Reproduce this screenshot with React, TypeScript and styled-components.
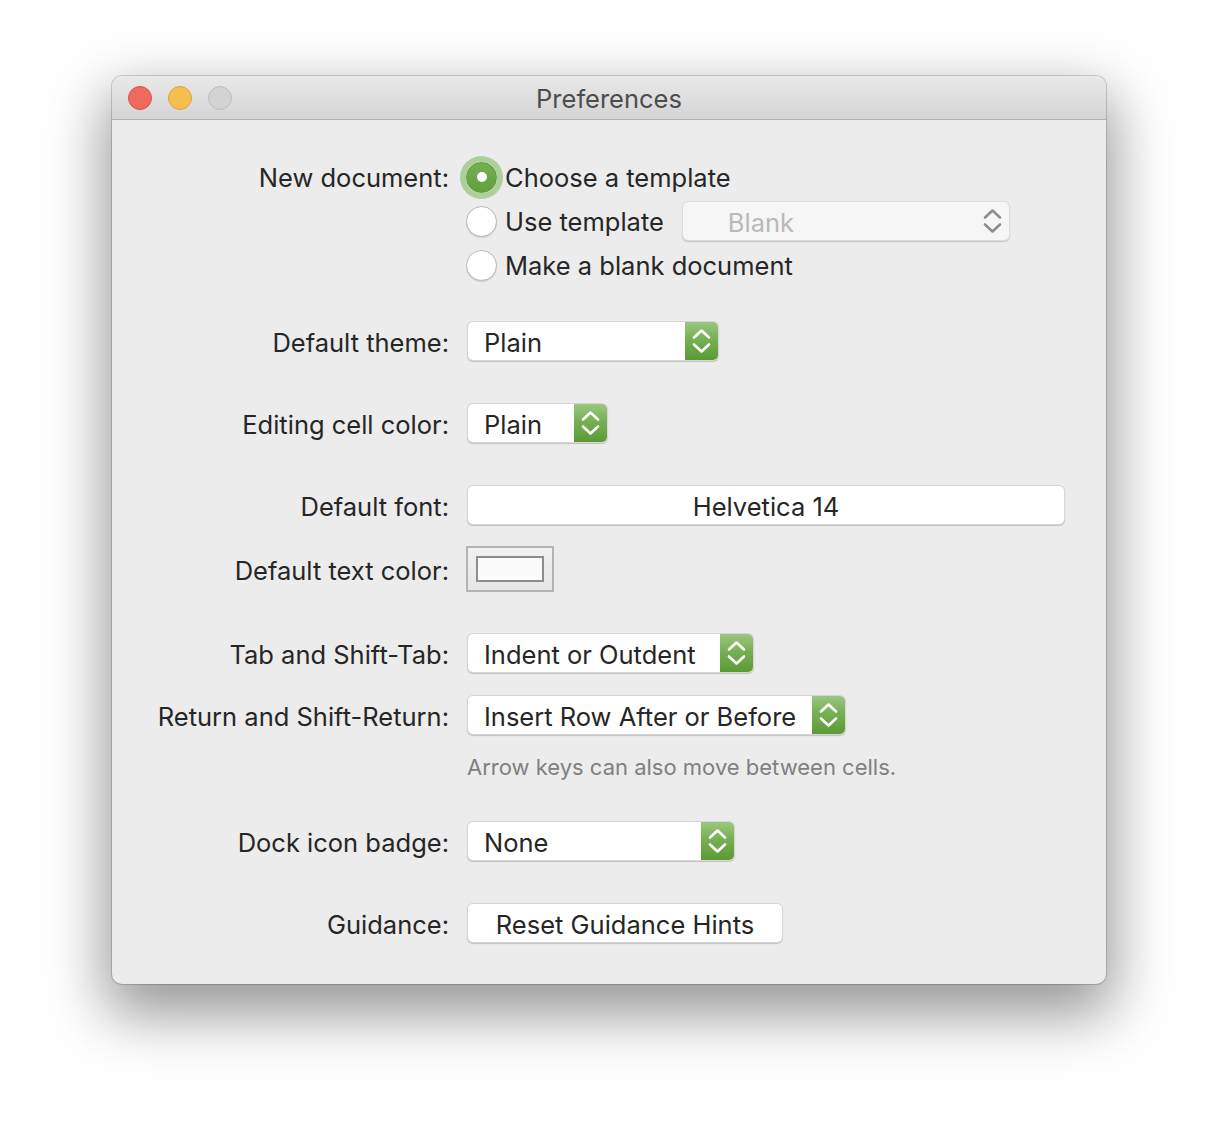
import React from "react";
import styled, { createGlobalStyle } from "styled-components";

const Global = createGlobalStyle`
  html, body { margin: 0; padding: 0; background: #ffffff; }
  body { font-family: Inter, "Helvetica Neue", "Liberation Sans", Arial, sans-serif; -webkit-font-smoothing: antialiased; }
`;

const Page = styled.div`
  padding: 76px 0 148px 112px;
`;

const Window = styled.div`
  width: 994px;
  height: 908px;
  border-radius: 10px;
  overflow: hidden;
  background: #ececec;
  box-shadow: 0 0 0 1px rgba(0, 0, 0, 0.16), 0 24px 60px 6px rgba(0, 0, 0, 0.42);
  display: flex;
  flex-direction: column;
`;

const TitleBar = styled.div`
  height: 43px;
  flex: none;
  position: relative;
  display: flex;
  align-items: center;
  justify-content: center;
  background: linear-gradient(#e9e9e9, #d4d4d4);
  border-bottom: 1px solid #b4b4b4;
`;

const Lights = styled.div`
  position: absolute;
  left: 16px;
  top: 10px;
  display: flex;
  gap: 16px;
`;

const Light = styled.span<{ $fill: string; $edge: string }>`
  width: 24px;
  height: 24px;
  box-sizing: border-box;
  border-radius: 50%;
  background: ${(p) => p.$fill};
  border: 1px solid ${(p) => p.$edge};
`;

const Title = styled.div`
  font-size: 25.5px;
  padding-top: 2px;
  color: #4d4d4d;
`;

const Form = styled.div`
  display: flex;
  flex-direction: column;
  padding-top: 35px;
`;

const Row = styled.div<{ $top?: number; $start?: boolean }>`
  display: grid;
  grid-template-columns: 337px auto;
  column-gap: 18px;
  align-items: ${(p) => (p.$start ? "start" : "center")};
  margin-top: ${(p) => p.$top ?? 0}px;
`;

const Label = styled.div<{ $h?: number }>`
  text-align: right;
  font-size: 25.5px;
  color: #262626;
  height: ${(p) => p.$h ?? 40}px;
  line-height: ${(p) => (p.$h ?? 40) + 4}px;
  white-space: nowrap;
`;

const Controls = styled.div`
  display: flex;
  flex-direction: column;
  align-items: flex-start;
`;

const RadioRow = styled.div`
  height: 44px;
  display: flex;
  align-items: center;
  gap: 8px;
  margin-left: -1px;
  font-size: 25.5px;
  color: #262626;
  white-space: nowrap;
`;

const Radio = styled.span<{ $on?: boolean }>`
  width: 31px;
  height: 31px;
  box-sizing: border-box;
  border-radius: 50%;
  flex: none;
  display: flex;
  align-items: center;
  justify-content: center;
  background: ${(p) => (p.$on ? "linear-gradient(#74ae52, #63a03f)" : "#ffffff")};
  border: 1px solid ${(p) => (p.$on ? "#5b9a3a" : "#b8b8b8")};
  box-shadow: ${(p) =>
    p.$on
      ? "0 0 0 6px rgba(132, 188, 100, 0.6)"
      : "0 1px 1px rgba(0,0,0,0.12)"};
  &::after {
    content: "";
    display: ${(p) => (p.$on ? "block" : "none")};
    width: 10px;
    height: 10px;
    border-radius: 50%;
    background: #ffffff;
  }
`;

const Popup = styled.div<{ $w: number; $disabled?: boolean }>`
  width: ${(p) => p.$w}px;
  height: 40px;
  box-sizing: border-box;
  display: flex;
  align-items: stretch;
  border-radius: 6px;
  background: ${(p) => (p.$disabled ? "#f6f6f6" : "#ffffff")};
  border: 1px solid ${(p) => (p.$disabled ? "rgba(0,0,0,0.1)" : "rgba(0,0,0,0.16)")};
  box-shadow: 0 1px 1px rgba(0, 0, 0, 0.18);
  overflow: hidden;
`;

const PopupText = styled.div<{ $disabled?: boolean }>`
  flex: 1;
  display: flex;
  align-items: center;
  padding-left: ${(p) => (p.$disabled ? 45 : 16)}px;
  padding-top: 2px;
  font-size: 25.5px;
  color: ${(p) => (p.$disabled ? "#b9b9b9" : "#262626")};
  white-space: nowrap;
`;

const Stepper = styled.div<{ $green?: boolean }>`
  width: 33px;
  flex: none;
  display: flex;
  align-items: center;
  justify-content: center;
  background: ${(p) => (p.$green ? "linear-gradient(#9cc67f, #76b055 45%, #5b9a33)" : "transparent")};
`;

const Chevrons = ({ color }: { color: string }) => (
  <svg width="33" height="38" viewBox="0 0 33 38">
    <path d="M9 15.5 L16.5 8.5 L24 15.5" fill="none" stroke={color} strokeWidth="2.6" strokeLinecap="round" strokeLinejoin="round" />
    <path d="M9 22.5 L16.5 29.5 L24 22.5" fill="none" stroke={color} strokeWidth="2.6" strokeLinecap="round" strokeLinejoin="round" />
  </svg>
);

const Button = styled.div<{ $w: number }>`
  width: ${(p) => p.$w}px;
  height: 40px;
  box-sizing: border-box;
  display: flex;
  align-items: center;
  justify-content: center;
  padding-top: 2px;
  border-radius: 6px;
  background: #ffffff;
  border: 1px solid rgba(0, 0, 0, 0.16);
  box-shadow: 0 1px 1px rgba(0, 0, 0, 0.18);
  font-size: 25.5px;
  color: #262626;
  white-space: nowrap;
`;

const Well = styled.div`
  width: 88px;
  height: 46px;
  box-sizing: border-box;
  margin-left: -1px;
  border: 2px solid #b4b4b4;
  background: linear-gradient(#f2f2f2, #e6e6e6);
  display: flex;
  align-items: center;
  justify-content: center;
`;

const Swatch = styled.div`
  width: 68px;
  height: 26px;
  box-sizing: border-box;
  border: 2px solid #8d8d8d;
  background: #fbfbfb;
`;

const Hint = styled.div`
  font-size: 22px;
  line-height: 28px;
  color: #808080;
  white-space: nowrap;
`;

const Select = ({ w, text }: { w: number; text: string }) => (
  <Popup $w={w}>
    <PopupText>{text}</PopupText>
    <Stepper $green>
      <Chevrons color="#ffffff" />
    </Stepper>
  </Popup>
);

export default function App() {
  return (
    <>
      <Global />
      <Page>
        <Window>
          <TitleBar>
            <Lights>
              <Light $fill="#ee6a5f" $edge="#d1544a" />
              <Light $fill="#f6be50" $edge="#d8a23f" />
              <Light $fill="#d3d3d3" $edge="#bcbcbc" />
            </Lights>
            <Title>Preferences</Title>
          </TitleBar>
          <Form>
            <Row $start>
              <Label $h={42}>New document:</Label>
              <Controls>
                <RadioRow>
                  <Radio $on />
                  Choose a template
                </RadioRow>
                <RadioRow>
                  <Radio />
                  Use template
                  <Popup $w={328} $disabled style={{ marginLeft: 10 }}>
                    <PopupText $disabled>Blank</PopupText>
                    <Stepper>
                      <Chevrons color="#8e8e8e" />
                    </Stepper>
                  </Popup>
                </RadioRow>
                <RadioRow>
                  <Radio />
                  Make a blank document
                </RadioRow>
              </Controls>
            </Row>
            <Row $top={34}>
              <Label>Default theme:</Label>
              <Select w={252} text="Plain" />
            </Row>
            <Row $top={42}>
              <Label>Editing cell color:</Label>
              <Select w={141} text="Plain" />
            </Row>
            <Row $top={42}>
              <Label>Default font:</Label>
              <Button $w={598}>Helvetica 14</Button>
            </Row>
            <Row $top={21}>
              <Label>Default text color:</Label>
              <Controls>
                <Well>
                  <Swatch />
                </Well>
              </Controls>
            </Row>
            <Row $top={41}>
              <Label>Tab and Shift-Tab:</Label>
              <Select w={287} text="Indent or Outdent" />
            </Row>
            <Row $top={22}>
              <Label>Return and Shift-Return:</Label>
              <Select w={379} text="Insert Row After or Before" />
            </Row>
            <Row $top={18}>
              <span />
              <Hint>Arrow keys can also move between cells.</Hint>
            </Row>
            <Row $top={40}>
              <Label>Dock icon badge:</Label>
              <Select w={268} text="None" />
            </Row>
            <Row $top={42}>
              <Label>Guidance:</Label>
              <Button $w={316}>Reset Guidance Hints</Button>
            </Row>
          </Form>
        </Window>
      </Page>
    </>
  );
}
